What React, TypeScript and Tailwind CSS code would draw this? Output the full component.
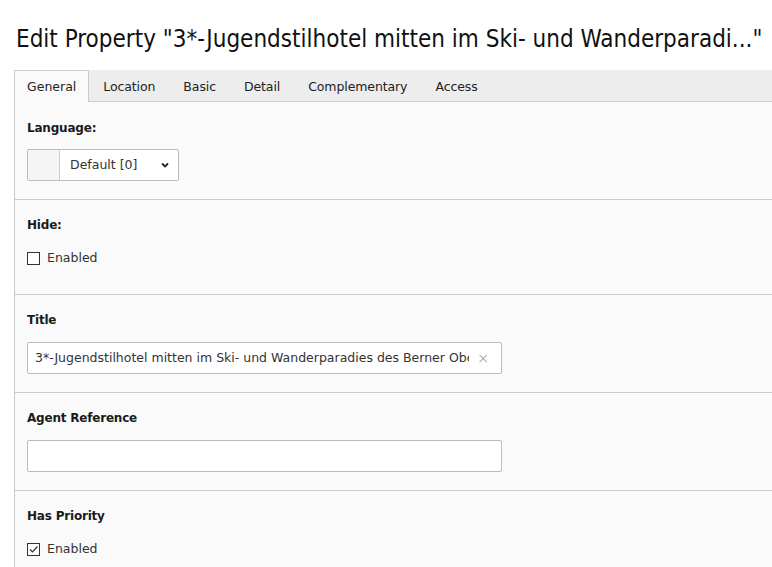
import React from "react";

const tabs = ["General", "Location", "Basic", "Detail", "Complementary", "Access"];

function Label({ children }: { children: React.ReactNode }) {
  return (
    <div className="h-[16px] leading-[16px] text-[12px] font-bold text-[#1a1a1a] tracking-[-0.2px]">
      {children}
    </div>
  );
}

function CheckRow({ checked }: { checked?: boolean }) {
  return (
    <div className="mt-[9px] flex h-[32px] items-center gap-[7px]">
      <span className="flex h-[13px] w-[13px] items-center justify-center border border-[#333] bg-white">
        {checked && (
          <svg width="11" height="11" viewBox="0 0 11 11">
            <path d="M2 5.5 L4.5 8 L9.5 2.5" fill="none" stroke="#333" strokeWidth="1.2" />
          </svg>
        )}
      </span>
      <span className="text-[12.5px] text-[#333]">Enabled</span>
    </div>
  );
}

export default function App() {
  return (
    <div className="min-h-[567px] bg-white font-['DejaVu_Sans',sans-serif] text-[#333]">
      <div className="pl-[16px] pt-[24px] h-[70px]">
        <h1 className="whitespace-nowrap text-[24px] leading-[30px] tracking-[0px] text-[#111] font-['Liberation_Sans_Narrow','DejaVu_Sans_Condensed',sans-serif]">
          Edit Property "3*-Jugendstilhotel mitten im Ski- und Wanderparadi..."
        </h1>
      </div>
      <div className="ml-[14px] border-l border-[#cccccc] bg-[#fafafa]">
        <div className="flex h-[32px] border-b border-[#cccccc] bg-[#ededed]">
          {tabs.map((t, i) =>
            i === 0 ? (
              <div
                key={t}
                className="-mb-px flex h-[32px] items-center border-r border-t border-[#cccccc] bg-[#fafafa] px-[12px] pt-[2px] text-[12.5px] text-[#222]"
              >
                {t}
              </div>
            ) : (
              <div key={t} className="flex items-center px-[14px] pt-[3px] text-[12.5px] text-[#222] tracking-[-0.1px]">
                {t}
              </div>
            )
          )}
        </div>

        <div className="border-b border-[#cccccc] px-[12px] pb-[18px] pt-[18px]">
          <Label>Language:</Label>
          <div className="mt-[13px] flex h-[32px] w-[152px] rounded-[2px] border border-[#bbbbbb] bg-white">
            <div className="w-[32px] border-r border-[#cccccc] bg-[#f5f5f5]" />
            <div className="flex flex-1 items-center justify-between pl-[10px] pr-[8px] text-[12.5px] text-[#333]">
              <span>Default [0]</span>
              <svg width="10" height="10" viewBox="0 0 10 10">
                <path d="M2 3.5 L5 6.5 L8 3.5" fill="none" stroke="#222" strokeWidth="1.8" />
              </svg>
            </div>
          </div>
        </div>

        <div className="border-b border-[#cccccc] px-[12px] pb-[20px] pt-[17px]">
          <Label>Hide:</Label>
          <CheckRow />
        </div>

        <div className="border-b border-[#cccccc] px-[12px] pb-[18px] pt-[17px]">
          <Label>Title</Label>
          <div className="mt-[14px] flex h-[32px] w-[475px] items-center rounded-[2px] border border-[#bbbbbb] bg-white pl-[7px] pr-[12px]">
            <span className="min-w-0 flex-1 overflow-hidden whitespace-nowrap text-[12.5px] text-[#333]">
              3*-Jugendstilhotel mitten im Ski- und Wanderparadies des Berner Oberland
            </span>
            <span className="ml-[8px] shrink-0 text-[14px] text-[#b0b0b0]">×</span>
          </div>
        </div>

        <div className="border-b border-[#cccccc] px-[12px] pb-[18px] pt-[17px]">
          <Label>Agent Reference</Label>
          <div className="mt-[14px] h-[32px] w-[475px] rounded-[2px] border border-[#bbbbbb] bg-white" />
        </div>

        <div className="px-[12px] pb-[20px] pt-[17px]">
          <Label>Has Priority</Label>
          <CheckRow checked />
        </div>
      </div>
    </div>
  );
}
